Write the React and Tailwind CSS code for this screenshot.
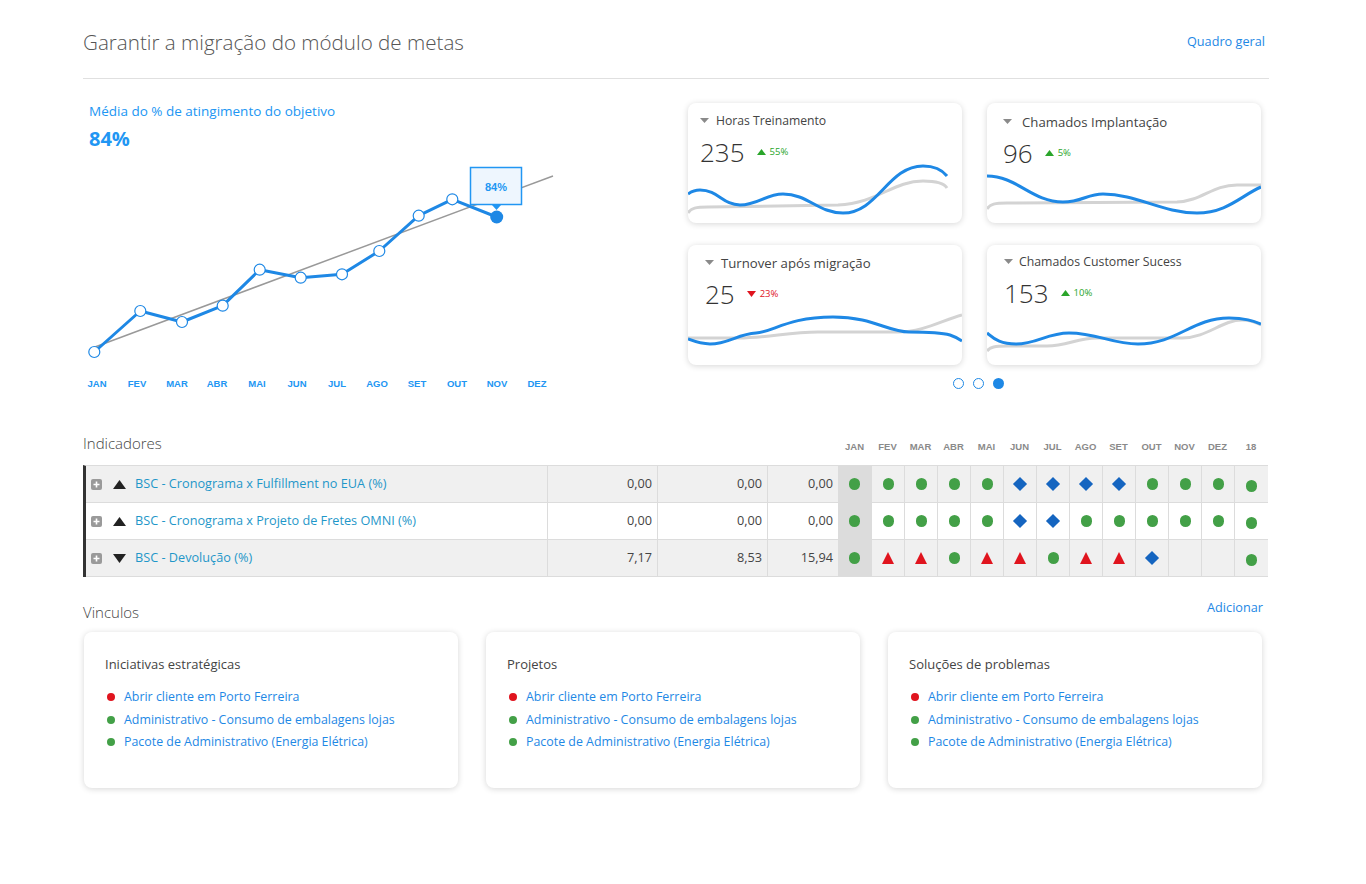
import React from "react";

const FONT = { fontFamily: '"Open Sans", "Noto Sans", sans-serif' };

const pts = [
  [11.3, 191], [57.3, 150], [99, 161], [139.7, 144.7], [176.7, 108.7], [217.7, 116.7],
  [259, 113.3], [296.3, 90], [335.7, 54.7], [369.3, 38.3], [413.7, 56],
];
const months = ["JAN", "FEV", "MAR", "ABR", "MAI", "JUN", "JUL", "AGO", "SET", "OUT", "NOV", "DEZ"];

function LineChart() {
  return (
    <svg width="480" height="235" className="block">
      <line x1="12" y1="186" x2="470" y2="15" stroke="#999" strokeWidth="1.5" />
      <polyline
        points={pts.map((p) => p.join(",")).join(" ")}
        fill="none"
        stroke="#1e88e5"
        strokeWidth="3"
        strokeLinejoin="round"
      />
      {pts.slice(0, 10).map((p, i) => (
        <circle key={i} cx={p[0]} cy={p[1]} r="5.5" fill="#fff" stroke="#1e88e5" strokeWidth="1.2" />
      ))}
      <circle cx={pts[10][0]} cy={pts[10][1]} r="6.5" fill="#1e88e5" />
      <rect x="387.5" y="6.5" width="51" height="37" fill="#eef6fe" stroke="#2196f3" strokeWidth="1.5" />
      <path d="M409,44 L413.5,49 L418,44 Z" fill="#2196f3" />
      <text x="413" y="30" textAnchor="middle" fontSize="11" fontWeight="700" fill="#2196f3" fontFamily="Liberation Sans, Arial, sans-serif">84%</text>
      {months.map((m, i) => (
        <text key={m} x={14 + i * 40} y="226" textAnchor="middle" fontSize="9.5" fontWeight="700" fill="#2196f3" fontFamily="Liberation Sans, Arial, sans-serif">
          {m}
        </text>
      ))}
    </svg>
  );
}

function Caret() {
  return (
    <svg width="9" height="6" viewBox="0 0 9 6">
      <path d="M0,0 L9,0 L4.5,5 Z" fill="#8a8a8a" />
    </svg>
  );
}

function Delta({ up, value }) {
  const c = up ? "#2aa52a" : "#e0141e";
  return (
    <span className="flex items-center gap-[4px] text-[9.5px]" style={{ color: c }}>
      <svg width="9" height="6" viewBox="0 0 9 6">
        {up ? <path d="M0,6 L9,6 L4.5,0 Z" fill={c} /> : <path d="M0,0 L9,0 L4.5,6 Z" fill={c} />}
      </svg>
      {value}
    </span>
  );
}

const cards = [
  {
    title: "Horas Treinamento",
    value: "235",
    up: true,
    delta: "55%",
    pad: "pl-[12px] pt-[9px]",
    fs: "text-[12.2px] gap-[7px]",
    blue: "M0,91 C4,88 8,87 12,87 C30,87 35,102 52,102 C70,102 78,91 95,91 C120,91 130,110 155,110 C190,110 200,63 235,63 C248,63 255,68 259,73",
    gray: "M0,110 C3,105 8,104 20,104 L150,102 C190,100 205,78 235,78 C248,78 256,80 259,85",
  },
  {
    title: "Chamados Implantação",
    value: "96",
    up: true,
    delta: "5%",
    pad: "pl-[16px] pt-[10px]",
    fs: "text-[13.2px] gap-[10px]",
    blue: "M0,73 C30,73 45,99 76,99 C95,99 100,91 116,91 C150,91 175,110 210,110 C240,110 255,92 274,84",
    gray: "M0,106 C3,101 8,100 20,100 L190,99 C215,98 225,82 250,82 L274,82",
  },
  {
    title: "Turnover após migração",
    value: "25",
    up: false,
    delta: "23%",
    pad: "pl-[17px] pt-[9px]",
    fs: "text-[13.2px] gap-[7px]",
    blue: "M0,94 C8,97 14,99 22,99 C40,99 50,89 68,88 C85,87 100,72 145,72 C185,72 200,87 221,87 C240,87 255,88 262,90 C268,92 271,94 274,96",
    gray: "M0,93 L50,93 C80,93 100,87 130,87 L210,87 C235,87 255,75 274,70",
  },
  {
    title: "Chamados Customer Sucess",
    value: "153",
    up: true,
    delta: "10%",
    pad: "pl-[17px] pt-[8px]",
    fs: "text-[12.3px] gap-[6px]",
    blue: "M0,88 C8,95 15,99 29,99 C50,99 60,88 82,88 C110,88 125,99 151,99 C190,99 205,73 242,73 C258,73 266,76 274,79",
    gray: "M0,106 C3,102 8,101 20,101 L60,101 C80,101 90,93 110,93 L195,93 C220,93 235,75 255,75 C265,75 270,78 274,80",
  },
];

function KpiCard({ c }) {
  return (
    <div className="relative h-[120px] w-[274px] overflow-hidden rounded-[8px] bg-white shadow-[0_1px_6px_rgba(0,0,0,0.16)]">
      <svg width="274" height="120" viewBox="0 0 274 120" className="absolute left-0 top-0">
        <path d={c.gray} fill="none" stroke="#d3d3d3" strokeWidth="3" />
        <path d={c.blue} fill="none" stroke="#1e88e5" strokeWidth="3" />
      </svg>
      <div className={`relative flex flex-col ${c.pad}`}>
        <div className={`flex items-center leading-[18px] text-[#444] ${c.fs}`}>
          <Caret />
          <span>{c.title}</span>
        </div>
        <div className="mt-[6px] flex items-center gap-[12px]">
          <span className="text-[26px] font-light leading-[32px] text-[#333]">{c.value}</span>
          <Delta up={c.up} value={c.delta} />
        </div>
      </div>
    </div>
  );
}

function Circle() {
  return <span className="block h-[12px] w-[11px] rounded-full bg-[#43a047]" />;
}
function Diamond() {
  return <span className="block h-[10px] w-[10px] rotate-45 bg-[#1565c0]" />;
}
function Tri() {
  return (
    <svg width="12" height="12" viewBox="0 0 12 12">
      <path d="M6,0 L12,12 L0,12 Z" fill="#e0141e" />
    </svg>
  );
}

const rows = [
  {
    name: "BSC - Cronograma x Fulfillment no EUA (%)",
    up: true,
    vals: ["0,00", "0,00", "0,00"],
    bg: "bg-[#f0f0f0]",
    marks: "ccccc" + "dddd" + "ccc" + "c",
  },
  {
    name: "BSC - Cronograma x Projeto de Fretes OMNI (%)",
    up: true,
    vals: ["0,00", "0,00", "0,00"],
    bg: "bg-white",
    marks: "ccccc" + "dd" + "ccccc" + "c",
  },
  {
    name: "BSC - Devolução (%)",
    up: false,
    vals: ["7,17", "8,53", "15,94"],
    bg: "bg-[#f0f0f0]",
    marks: "cttcttcttd" + "--" + "c",
  },
];

function Mark({ m }) {
  if (m === "c") return <Circle />;
  if (m === "d") return <Diamond />;
  if (m === "t") return <Tri />;
  return null;
}

const vincCards = [
  { title: "Iniciativas estratégicas" },
  { title: "Projetos" },
  { title: "Soluções de problemas" },
];
const vincItems = [
  { color: "bg-[#e0141e]", text: "Abrir cliente em Porto Ferreira" },
  { color: "bg-[#43a047]", text: "Administrativo - Consumo de embalagens lojas" },
  { color: "bg-[#43a047]", text: "Pacote de Administrativo (Energia Elétrica)" },
];

export default function App() {
  return (
    <div className="min-h-[884px] w-[1366px] bg-white" style={FONT}>
      <div className="ml-[83px] w-[1186px]">
        {/* Header */}
        <div className="flex h-[79px] items-center justify-between border-b border-[#e0e0e0] pb-[0px] pt-[6px]">
          <h1 className="text-[20.6px] font-light leading-[28px] text-[#555]">
            Garantir a migração do módulo de metas
          </h1>
          <a className="pr-[4px] text-[12.7px] text-[#1e88e5]">Quadro geral</a>
        </div>

        {/* Top section */}
        <div className="flex pt-[23px]">
          <div className="w-[605px]">
            <div className="pl-[6px] text-[13.5px] leading-[18px] text-[#2196f3]">
              Média do % de atingimento do objetivo
            </div>
            <div className="pl-[6px] pt-[6px] text-[20px] font-bold leading-[26px] text-[#2196f3]">84%</div>
            <div className="pt-[9px]">
              <LineChart />
            </div>
          </div>
          <div className="flex flex-col pt-[1px]">
            <div className="grid grid-cols-[274px_274px] gap-x-[25px] gap-y-[22px]">
              {cards.map((c) => (
                <KpiCard key={c.title} c={c} />
              ))}
            </div>
            <div className="mt-[13px] flex justify-center gap-[9px] pl-[8px]">
              <span className="h-[11px] w-[11px] rounded-full border border-[#1e88e5]" />
              <span className="h-[11px] w-[11px] rounded-full border border-[#1e88e5]" />
              <span className="h-[11px] w-[11px] rounded-full bg-[#1e88e5]" />
            </div>
          </div>
        </div>

        {/* Indicadores */}
        <div className="mt-[37px] flex items-end">
          <div className="w-[755px] pb-[12px] text-[15px] font-light leading-[20px] text-[#444]">Indicadores</div>
          {months.concat(["18"]).map((m, i) => (
            <div
              key={m}
              className={`${i === 12 ? "w-[34px]" : "w-[33px]"} pb-[12px] text-center text-[9.5px] font-bold leading-[12px] text-[#8a8a8a]`}
              style={{ fontFamily: "Liberation Sans, Arial, sans-serif" }}
            >
              {m}
            </div>
          ))}
        </div>
        <div className="w-[1185px] border-l-[3px] border-l-[#333] border-t border-t-[#dcdcdc]">
          {rows.map((r) => (
            <div key={r.name} className={`flex h-[37px] border-b border-[#dcdcdc] ${r.bg}`}>
              <div className="flex w-[461px] items-center pl-[5px]">
                <span className="flex h-[11px] w-[11px] items-center justify-center rounded-[2px] bg-[#9a9a9a]">
                  <svg width="7" height="7" viewBox="0 0 7 7">
                    <path d="M3.5,0.5 V6.5 M0.5,3.5 H6.5" stroke="#fff" strokeWidth="1.6" />
                  </svg>
                </span>
                <svg width="13" height="9" viewBox="0 0 13 9" className="ml-[11px]">
                  {r.up ? <path d="M6.5,0 L13,9 L0,9 Z" fill="#222" /> : <path d="M0,0 L13,0 L6.5,9 Z" fill="#222" />}
                </svg>
                <span className="ml-[9px] text-[12.7px] text-[#1f97c9]">{r.name}</span>
              </div>
              {r.vals.map((v, i) => (
                <div
                  key={i}
                  className={`flex ${i === 2 ? "w-[71px]" : "w-[110px]"} items-center justify-end border-l border-[#dcdcdc] pr-[5px] text-[12.7px] text-[#444]`}
                >
                  {v}
                </div>
              ))}
              {r.marks.split("").map((m, i) => (
                <div
                  key={i}
                  className={`flex ${i === 12 ? "w-[34px] pt-[3px]" : "w-[33px]"} items-center justify-center ${
                    i === 0 ? "bg-[#dcdcdc]" : "border-l border-[#dcdcdc]"
                  }`}
                >
                  <Mark m={m} />
                </div>
              ))}
            </div>
          ))}
        </div>

        {/* Vinculos */}
        <div className="mt-[21px] flex items-start justify-between">
          <div className="pt-[4px] text-[15px] font-light leading-[20px] text-[#444]">Vinculos</div>
          <a className="pr-[6px] text-[12.7px] leading-[18px] text-[#1e88e5]">Adicionar</a>
        </div>
        <div className="mt-[10px] flex gap-[28px] pl-[1px]">
          {vincCards.map((c) => (
            <div
              key={c.title}
              className="h-[156px] w-[374px] rounded-[8px] bg-white px-[21px] pt-[23px] shadow-[0_1px_6px_rgba(0,0,0,0.16)]"
            >
              <div className="text-[13px] leading-[18px] text-[#444]">{c.title}</div>
              <div className="mt-[15px] flex flex-col gap-[4.5px]">
                {vincItems.map((it) => (
                  <div key={it.text} className="flex items-center gap-[9px] pl-[2px] text-[12.4px] leading-[18px] text-[#1e88e5]">
                    <span className={`h-[8px] w-[8px] rounded-full ${it.color}`} />
                    <span>{it.text}</span>
                  </div>
                ))}
              </div>
            </div>
          ))}
        </div>
      </div>
    </div>
  );
}
